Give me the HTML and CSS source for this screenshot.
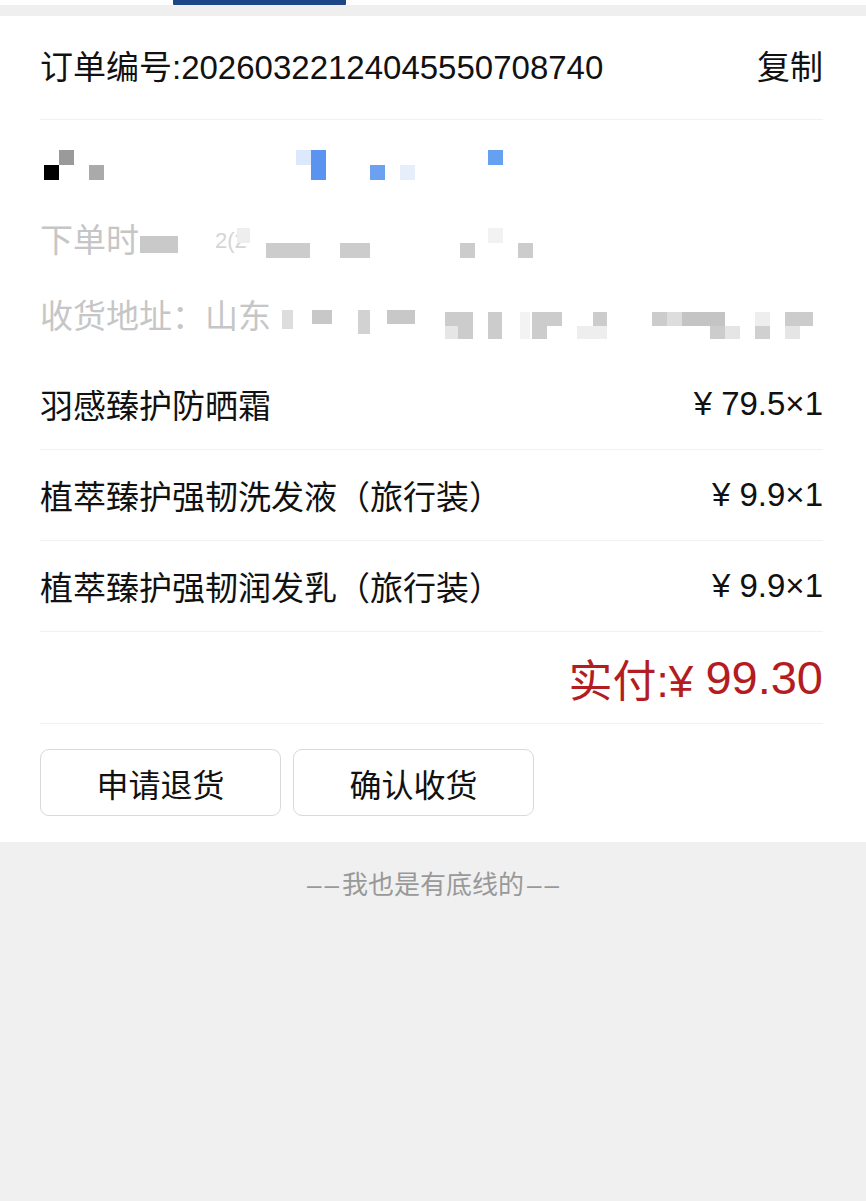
FILE: index.html
```html
<!DOCTYPE html>
<html lang="zh-CN">
<head>
<meta charset="utf-8">
<title>订单详情</title>
<link rel="stylesheet" href="styles.css">
</head>
<body>
<div class="tabbar"><div class="tab-indicator"></div></div>
<div class="tab-gap"></div>
<main class="card">
  <div class="order-row">
    <span class="order-no">订单编号:20260322124045550708740</span>
    <span class="copy">复制</span>
  </div>
  <div class="info">
    <div class="info-row mosaic-row">
      <i class="px" style="left:19px;top:2px;width:15px;height:15px;background:#9a9a9a"></i>
      <i class="px" style="left:4px;top:17px;width:15px;height:15px;background:#000"></i>
      <i class="px" style="left:49px;top:17px;width:15px;height:15px;background:#aaa"></i>
      <i class="px" style="left:256px;top:2px;width:15px;height:15px;background:#dce8fb"></i>
      <i class="px" style="left:271px;top:2px;width:15px;height:30px;background:#5b93f0"></i>
      <i class="px" style="left:330px;top:17px;width:15px;height:15px;background:#6ca0f0"></i>
      <i class="px" style="left:360px;top:17px;width:15px;height:15px;background:#e6eefc"></i>
      <i class="px" style="left:448px;top:2px;width:15px;height:15px;background:#66a0f0"></i>
    </div>
    <div class="info-row muted">
      <span>下单时</span>
      <span class="faint">2(2</span>
      <i class="px" style="left:100px;top:12px;width:38px;height:17px;background:#c9c9c9"></i>
      <i class="px" style="left:197px;top:4px;width:13px;height:15px;background:#eee"></i>
      <i class="px" style="left:226px;top:19px;width:44px;height:15px;background:#ccc"></i>
      <i class="px" style="left:300px;top:19px;width:30px;height:15px;background:#ccc"></i>
      <i class="px" style="left:420px;top:19px;width:15px;height:15px;background:#ccc"></i>
      <i class="px" style="left:448px;top:4px;width:15px;height:15px;background:#f2f2f2"></i>
      <i class="px" style="left:478px;top:19px;width:15px;height:15px;background:#ccc"></i>
    </div>
    <div class="info-row muted">
      <span>收货地址：山东</span>
      <i class="px" style="left:242px;top:10px;width:11px;height:19px;background:#ddd"></i>
      <i class="px" style="left:272px;top:10px;width:20px;height:14px;background:#c8c8c8"></i>
      <i class="px" style="left:318px;top:10px;width:12px;height:24px;background:#d2d2d2"></i>
      <i class="px" style="left:347px;top:10px;width:28px;height:14px;background:#c8c8c8"></i>
      <i class="px" style="left:405px;top:12px;width:28px;height:14px;background:#ccc"></i>
      <i class="px" style="left:405px;top:26px;width:13px;height:13px;background:#e6e6e6"></i>
      <i class="px" style="left:418px;top:26px;width:15px;height:13px;background:#ccc"></i>
      <i class="px" style="left:448px;top:12px;width:14px;height:27px;background:#ccc"></i>
      <i class="px" style="left:480px;top:12px;width:10px;height:27px;background:#f3f3f3"></i>
      <i class="px" style="left:492px;top:12px;width:30px;height:14px;background:#ccc"></i>
      <i class="px" style="left:492px;top:26px;width:15px;height:13px;background:#ccc"></i>
      <i class="px" style="left:553px;top:12px;width:14px;height:14px;background:#ccc"></i>
      <i class="px" style="left:537px;top:26px;width:30px;height:13px;background:#eee"></i>
      <i class="px" style="left:612px;top:12px;width:15px;height:14px;background:#ccc"></i>
      <i class="px" style="left:627px;top:12px;width:15px;height:14px;background:#ddd"></i>
      <i class="px" style="left:642px;top:12px;width:43px;height:14px;background:#c4c4c4"></i>
      <i class="px" style="left:670px;top:26px;width:15px;height:13px;background:#ccc"></i>
      <i class="px" style="left:685px;top:26px;width:15px;height:13px;background:#e5e5e5"></i>
      <i class="px" style="left:715px;top:12px;width:15px;height:14px;background:#eee"></i>
      <i class="px" style="left:715px;top:26px;width:15px;height:13px;background:#d0d0d0"></i>
      <i class="px" style="left:745px;top:12px;width:28px;height:14px;background:#ccc"></i>
      <i class="px" style="left:745px;top:26px;width:15px;height:13px;background:#e5e5e5"></i>
    </div>
  </div>
  <div class="item"><span>羽感臻护防晒霜</span><span>¥ 79.5×1</span></div>
  <div class="item"><span>植萃臻护强韧洗发液（旅行装）</span><span>¥ 9.9×1</span></div>
  <div class="item"><span>植萃臻护强韧润发乳（旅行装）</span><span>¥ 9.9×1</span></div>
  <div class="total">实付:¥ <span class="total-num">99.30</span></div>
  <div class="actions">
    <button class="btn">申请退货</button>
    <button class="btn">确认收货</button>
  </div>
</main>
<footer class="footer"><span class="dash">––</span>我也是有底线的<span class="dash dash-r">––</span></footer>
</body>
</html>
```

FILE: styles.css
```css
* { box-sizing: border-box; }
html, body { margin: 0; padding: 0; }
body {
  background: #f0f0f0;
  font-family: "Liberation Sans", "Noto Sans CJK SC", sans-serif;
  color: #111;
  min-height: 1201px;
}
.tabbar { height: 5px; background: #fff; }
.tab-indicator { width: 173px; height: 5px; margin-left: 173px; background: #1c4685; border-radius: 0 0 1px 1px; }
.tab-gap { height: 11px; background: #efefef; }
.card { background: #fff; padding: 0 43px 0 40px; }
.order-row {
  height: 104px;
  display: flex;
  align-items: center;
  justify-content: space-between;
  font-size: 33px;
  border-bottom: 1px solid #f1f1f1;
  padding-bottom: 6px;
}
.info { display: flex; flex-direction: column; gap: 42px; padding: 28px 0 25px; }
.info-row { position: relative; height: 34px; font-size: 33px; line-height: 34px; white-space: nowrap; }
.muted { color: #c6c6c6; }
.faint { position: absolute; left: 175px; top: 0; color: #d5d5d5; font-size: 22px; }
.px { position: absolute; display: block; }
.item {
  height: 91px;
  display: flex;
  align-items: center;
  justify-content: space-between;
  font-size: 33px;
  border-bottom: 1px solid #f1f1f1;
}
.total {
  height: 92px;
  display: flex;
  align-items: center;
  justify-content: flex-end;
  font-size: 44px;
  color: #b31d22;
  border-bottom: 1px solid #f1f1f1;
  white-space: pre;
}
.total-num { font-size: 47px; }
.actions { display: flex; gap: 12px; padding: 25px 0 26px; }
.btn {
  width: 241px;
  height: 67px;
  background: #fff;
  border: 1px solid #d9d9d9;
  border-radius: 9px;
  font-family: "Liberation Sans", "Noto Sans CJK SC", sans-serif;
  font-size: 32px;
  color: #111;
  padding: 0;
}
.footer {
  text-align: center;
  font-size: 26px;
  color: #999;
  padding-top: 22px;
}
.dash { font-family: "Liberation Sans", sans-serif; letter-spacing: 3px; }
.dash-r { margin-left: 3px; letter-spacing: 3px; margin-right: -3px; }
```
